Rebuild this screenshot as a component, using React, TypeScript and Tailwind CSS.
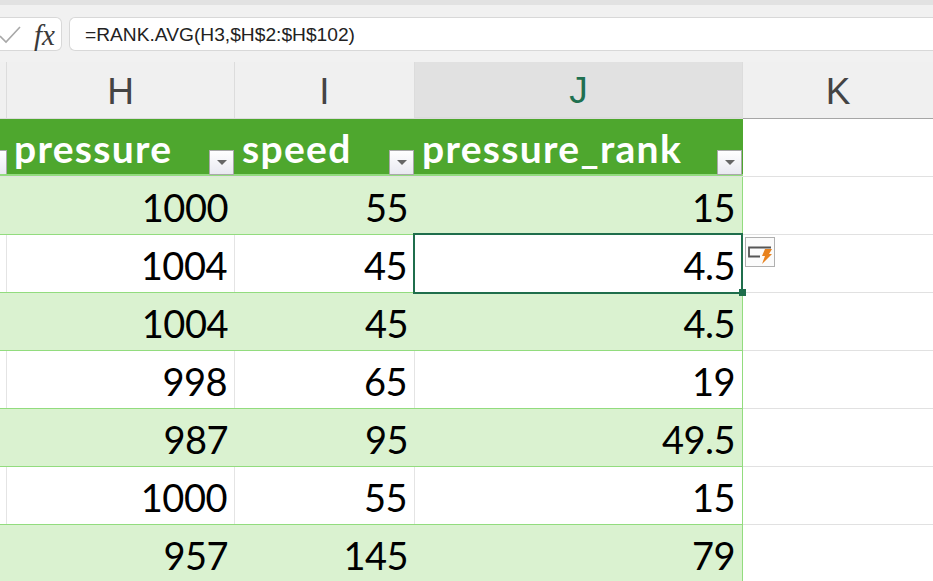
const rows = [
  { p: "1000", s: "55", r: "15", band: true },
  { p: "1004", s: "45", r: "4.5", band: false },
  { p: "1004", s: "45", r: "4.5", band: true },
  { p: "998", s: "65", r: "19", band: false },
  { p: "987", s: "95", r: "49.5", band: true },
  { p: "1000", s: "55", r: "15", band: false },
  { p: "957", s: "145", r: "79", band: true },
];

function FilterBtn({ className = "" }: { className?: string }) {
  return (
    <div className={"w-[25px] h-[25px] border border-[#a9a9a9] bg-gradient-to-b from-white to-[#e9e9f1] flex items-center justify-center " + className}>
      <div className="w-0 h-0 border-l-[5px] border-r-[5px] border-t-[5px] border-l-transparent border-r-transparent border-t-[#666666]" />
    </div>
  );
}

function Head({ w, label, active, border = true }: { w: string; label: string; active?: boolean; border?: boolean }) {
  return (
    <div
      className={
        w +
        " shrink-0 flex items-center justify-center h-full pt-[3px] text-[37px] " +
        (active ? "bg-[#e1e1e1] text-[#1f7050] border-b-[2px] border-[#1f6e4c] " : "text-[#444444] border-b border-[#a6a6a6] ") +
        (border ? "border-r border-[#dcdcdc]" : "")
      }
      style={{ fontFamily: '"Liberation Sans", sans-serif' }}
    >
      {label}
    </div>
  );
}

export default function App() {
  return (
    <div className="relative w-[933px] h-[581px] overflow-hidden bg-white" style={{ fontFamily: "Lato, sans-serif" }}>
      {/* Formula bar */}
      <div className="h-[62px] bg-[#f1f1f1] border-t-[5px] border-[#e2e2e2] flex items-start pt-[12px] gap-[7px]">
        <div className="w-[62px] h-[34px] shrink-0 bg-white border border-[#d8d8d8] rounded-r-[6px] border-l-0 relative flex items-center">
          <svg width="22" height="20" viewBox="0 0 22 20" className="absolute left-0 top-[6px]">
            <path d="M0 12 L6 18 L20 3" fill="none" stroke="#a8a8a8" strokeWidth="1.6" />
          </svg>
          <span className="absolute left-[34px] top-[1px] text-[29px] italic text-[#3a3a3a] leading-[32px]" style={{ fontFamily: '"Liberation Serif", serif', fontWeight: 500 }}>
            fx
          </span>
        </div>
        <div className="flex-1 h-[34px] bg-white border border-[#d8d8d8] border-r-0 rounded-l-[6px] pl-[15px] pt-[3px] flex items-center text-[19.2px] text-[#222222]" style={{ fontFamily: '"Liberation Sans", sans-serif' }}>
          =RANK.AVG(H3,$H$2:$H$102)
        </div>
      </div>
      {/* Column headers */}
      <div className="flex h-[57px] bg-[#f0f0f0]">
        <Head w="w-[7px]" label="" />
        <Head w="w-[228px]" label="H" />
        <Head w="w-[180px]" label="I" />
        <Head w="w-[328px]" label="J" active />
        <Head w="flex-1" label="K" border={false} />
      </div>
      {/* Table header */}
      <div className="flex h-[58px] bg-white border-b border-[#e1e1e1]">
        <div className="w-[743px] shrink-0 flex bg-[#4ea72e] border-b-[2px] border-[#92dc7e] text-white font-bold text-[39px] leading-none">
          <div className="w-[7px] shrink-0 relative overflow-hidden">
            <FilterBtn className="absolute right-0 top-[31px]" />
          </div>
          <div className="w-[228px] shrink-0 flex justify-between pl-[7px] pr-[1px] relative">
            <span className="pt-[10px] tracking-[1.3px]">pressure</span>
            <FilterBtn className="mt-[31px]" />
          </div>
          <div className="w-[180px] shrink-0 flex justify-between pl-[7px] pr-[1px]">
            <span className="pt-[10px] tracking-[1.3px]">speed</span>
            <FilterBtn className="mt-[31px]" />
          </div>
          <div className="w-[328px] shrink-0 flex justify-between pl-[7px] pr-[1px]">
            <span className="pt-[10px] tracking-[1.3px]">pressure_rank</span>
            <FilterBtn className="mt-[31px]" />
          </div>
        </div>
      </div>
      {/* Rows */}
      {rows.map((row, i) => (
        <div key={i} className="flex h-[58px] shrink-0 border-b border-[#e1e1e1]">
          <div
            className={
              "w-[743px] shrink-0 flex border-b border-r border-[#92dc7e] text-black text-[38px] tracking-[-0.5px] text-right leading-none -mb-px " +
              (row.band ? "bg-[#daf2d0]" : "bg-white")
            }
          >
            <div className={"w-[7px] shrink-0 " + (row.band ? "" : "border-r border-[#e4e4e4]")} />
            <div className={"w-[228px] shrink-0 pr-[7px] pt-[11px] " + (row.band ? "" : "border-r border-[#e4e4e4]")}>{row.p}</div>
            <div className={"w-[180px] shrink-0 pr-[7px] pt-[11px] " + (row.band ? "" : "border-r border-[#e4e4e4]")}>{row.s}</div>
            <div className="w-[327px] shrink-0 pr-[7px] pt-[11px]">{row.r}</div>
          </div>
        </div>
      ))}
      {/* Selected cell */}
      <div className="absolute left-[413px] top-[233px] w-[330px] h-[61px] border-2 border-[#1f6e4c]" />
      <div className="absolute left-[739px] top-[289px] w-[7px] h-[7px] bg-[#1f6e4c]" />
      {/* Smart tag */}
      <div className="absolute left-[745px] top-[237px] w-[30px] h-[30px] border border-[#b0b0b0] bg-[#fbfbfb]">
        <svg width="28" height="28" viewBox="0 0 28 28" className="block">
          <path d="M14 18.5 H3 V9.5 H25" fill="none" stroke="#555555" strokeWidth="1.8" />
          <path d="M19 11 H26 L23 16 H26 L16 26 L19 18 H16 Z" fill="#e8821e" />
        </svg>
      </div>
    </div>
  );
}
